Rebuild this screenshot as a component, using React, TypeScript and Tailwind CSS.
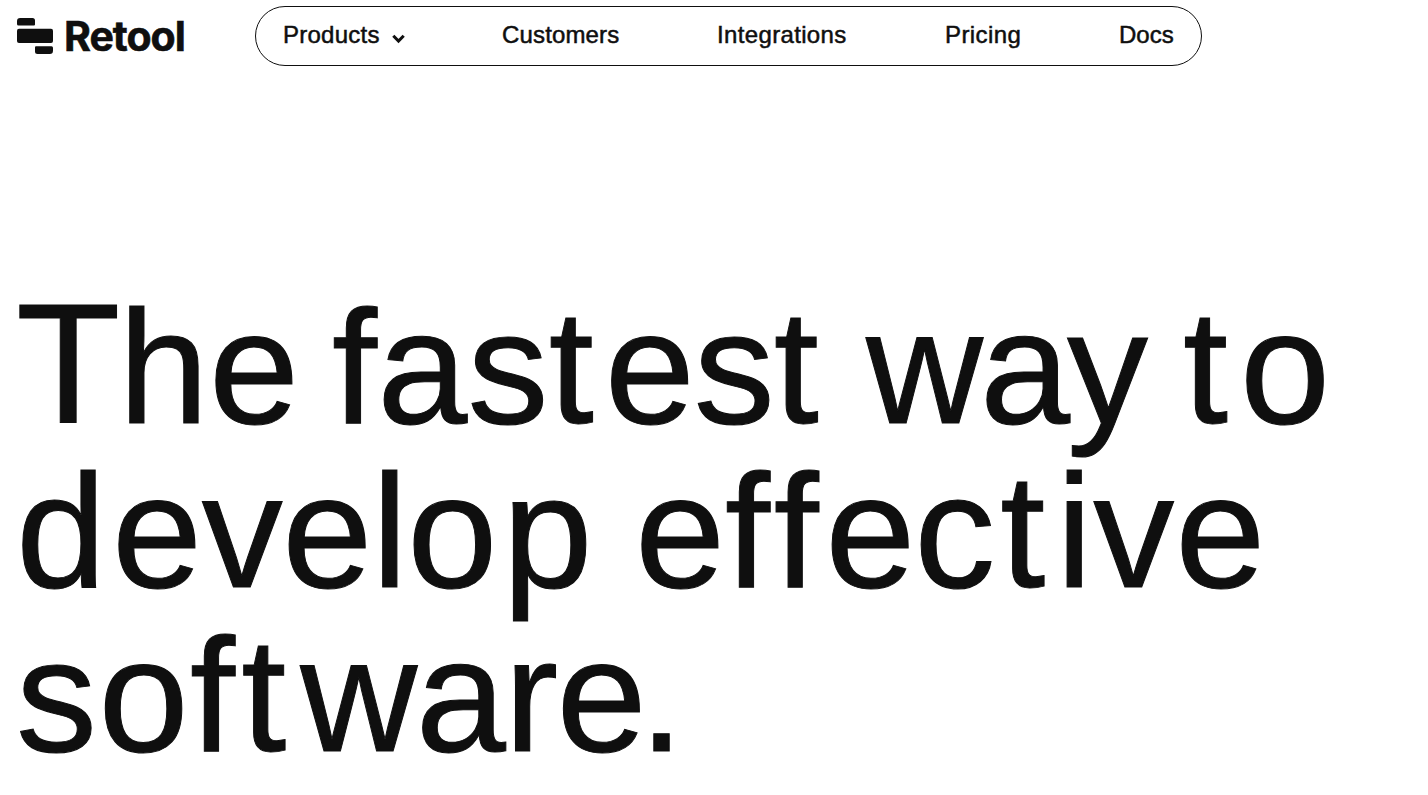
import { clsx } from "clsx";

interface NavItem {
  label: string;
  className: string;
  hasMenu?: boolean;
}

interface HeadlineWord {
  parts: Array<{ text: string; className: string }>;
  className?: string;
}

const navItems: NavItem[] = [
  { label: "Products", className: "w-[219px] tracking-[0.25px]", hasMenu: true },
  { label: "Customers", className: "w-[215px] tracking-[0.15px]" },
  { label: "Integrations", className: "w-[228px] tracking-[0.35px]" },
  { label: "Pricing", className: "w-[174px] tracking-[0.4px]" },
  { label: "Docs", className: "" },
];

// Display type is kerned by hand, so some words are split into parts
const headline: HeadlineWord[][] = [
  [
    {
      className: "w-[316px] first-letter:text-[171px] first-letter:tracking-[-2px]",
      parts: [{ text: "The", className: "tracking-[0.5px]" }],
    },
    {
      className: "w-[534px]",
      parts: [
        { text: "fas", className: "tracking-[0.2px]" },
        { text: "t", className: "tracking-[11px]" },
        { text: "est", className: "tracking-[-1px]" },
      ],
    },
    { className: "w-[317px]", parts: [{ text: "way", className: "tracking-[-3px]" }] },
    { parts: [{ text: "to", className: "tracking-[12px]" }] },
  ],
  [
    {
      className: "w-[619px]",
      parts: [
        { text: "d", className: "tracking-[6px]" },
        { text: "evel", className: "tracking-[-0.5px]" },
        { text: "op", className: "tracking-[5px]" },
      ],
    },
    {
      parts: [
        { text: "e", className: "tracking-[0px]" },
        { text: "ff", className: "tracking-[6.5px]" },
        { text: "e", className: "tracking-[-1px]" },
        { text: "c", className: "tracking-[5px]" },
        { text: "t", className: "tracking-[11px]" },
        { text: "ive", className: "tracking-[1px]" },
      ],
    },
  ],
  [
    {
      parts: [
        { text: "so", className: "tracking-[1.4px]" },
        { text: "f", className: "tracking-[6.4px]" },
        { text: "t", className: "tracking-[14px]" },
        { text: "war", className: "tracking-[-1.6px]" },
        { text: "e.", className: "tracking-[-7.6px]" },
      ],
    },
  ],
];

function Logo() {
  return (
    <a href="#" className="flex w-[238px] shrink-0 items-center">
      <svg width="36" height="36" viewBox="0 0 36 36" fill="currentColor">
        <path d="M0 3.2A3.2 3.2 0 0 1 3.2 0H15.5A2.5 2.5 0 0 1 18 2.5V6.5A1 1 0 0 1 17 7.5H1.5A1.5 1.5 0 0 1 0 6Z" />
        <rect y="10.8" width="36" height="14.2" rx="2" />
        <path d="M19 28.2H34.5A1.5 1.5 0 0 1 36 29.7V32.8A3.2 3.2 0 0 1 32.8 36H20.5A2.5 2.5 0 0 1 18 33.5V29.2A1 1 0 0 1 19 28.2Z" />
      </svg>
      <span className="ml-[11px] font-['Inter',sans-serif] text-[41px] leading-[60px] font-bold tracking-[-1px] [-webkit-text-stroke:0.6px_currentColor]">
        Retool
      </span>
    </a>
  );
}

export default function App() {
  return (
    <div className="h-[795px] overflow-hidden bg-white font-['Liberation_Sans',Arial,sans-serif] text-[#0f0f0f]">
      <header className="flex pt-[6px] pl-[17px]">
        <Logo />
        <nav className="flex h-[60px] w-[947px] items-center rounded-full border border-current pl-[27px] text-[24px] [-webkit-text-stroke:0.5px_currentColor]">
          {navItems.map((item) => (
            <a
              key={item.label}
              href="#"
              className={clsx("flex shrink-0 items-center pb-[2px]", item.className)}
            >
              {item.label}
              {item.hasMenu && (
                <svg
                  className="mt-[7px] ml-[12px]"
                  width="13"
                  height="10"
                  viewBox="0 0 13 10"
                  fill="none"
                  stroke="currentColor"
                  strokeWidth="3"
                >
                  <path d="M1.3 1.7 6.5 7 11.7 1.7" />
                </svg>
              )}
            </a>
          ))}
        </nav>
      </header>

      <h1 className="mt-[216px] pl-[16px] text-[162px] leading-[164px] [-webkit-text-stroke:1px_currentColor]">
        {headline.map((line, index) => (
          <span key={index} className="flex items-baseline">
            {line.map((word, wordIndex) => (
              <span key={wordIndex} className={clsx("block shrink-0", word.className)}>
                {word.parts.map((part, partIndex) => (
                  <span key={partIndex} className={part.className}>
                    {part.text}
                  </span>
                ))}
              </span>
            ))}
          </span>
        ))}
      </h1>
    </div>
  );
}
